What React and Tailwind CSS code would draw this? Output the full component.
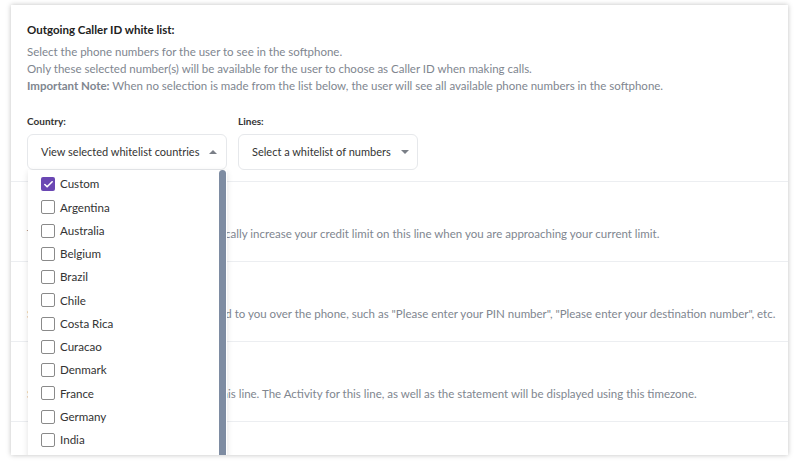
import { Check } from 'lucide-react'

const countries = [
  'Custom',
  'Argentina',
  'Australia',
  'Belgium',
  'Brazil',
  'Chile',
  'Costa Rica',
  'Curacao',
  'Denmark',
  'France',
  'Germany',
  'India',
]

const rows = [
  'Tick this option if you want to automatically increase your credit limit on this line when you are approaching your current limit.',
  'Select a language for the prompts played to you over the phone, such as "Please enter your PIN number", "Please enter your destination number", etc.',
  'Select the timezone which is used for this line. The Activity for this line, as well as the statement will be displayed using this timezone.',
  '',
]

function Caret({ up }) {
  return (
    <span
      className={
        up
          ? 'h-0 w-0 border-x-[4px] border-b-[4px] border-x-transparent border-b-[#7a7f87]'
          : 'h-0 w-0 border-x-[4px] border-t-[4px] border-x-transparent border-t-[#7a7f87]'
      }
    />
  )
}

function CountryDropdown() {
  return (
    <div className="absolute left-[17px] top-[165px] h-[290px] w-[199px] bg-white shadow-[0_2px_6px_rgba(0,0,0,0.12)]">
      <div className="flex flex-col pt-[2.4px]">
        {countries.map((c, i) => (
          <label key={c} className="flex h-[23.27px] items-center gap-[5px] pl-[13px] text-[11.6px] text-[#333]">
            {i === 0 ? (
              <span className="flex h-[14px] w-[14px] items-center justify-center rounded-[2px] bg-[#6a47b3]">
                <Check size={11} strokeWidth={3.5} className="text-white" />
              </span>
            ) : (
              <span className="h-[14px] w-[14px] rounded-[2px] border-[1.5px] border-[#8a8a8a] bg-white" />
            )}
            {c}
          </label>
        ))}
      </div>
      <div className="absolute bottom-0 right-[1px] top-0 w-[7px] rounded-t-[4px] bg-[#7e8ca2]" />
    </div>
  )
}

export default function App() {
  return (
    <div className="h-[462px] w-[800px] overflow-hidden bg-white px-[11px] pt-[5px] font-['Lato','Liberation_Sans',sans-serif]">
      <div className="relative h-[450px] w-[777px] overflow-hidden bg-white shadow-[0_0_5px_rgba(0,0,0,0.25)]">
        <div className="px-[16px] pt-[17px]">
          <h2 className="text-[11.5px] font-bold leading-[16px] text-[#222]">Outgoing Caller ID white list:</h2>
          <div className="mt-[5px] text-[11.5px] leading-[17px] text-[#80868f]">
            <p>Select the phone numbers for the user to see in the softphone.</p>
            <p>Only these selected number(s) will be available for the user to choose as Caller ID when making calls.</p>
            <p>
              <span className="font-bold">Important Note:</span> When no selection is made from the list below, the user
              will see all available phone numbers in the softphone.
            </p>
          </div>
          <div className="mt-[20px] flex gap-[11px]">
            <div className="flex flex-col">
              <span className="text-[10px] font-bold leading-[14px] text-[#333]">Country:</span>
              <button className="mt-[6px] flex h-[36px] w-[200px] items-center justify-between whitespace-nowrap rounded-[6px] border border-[#e6e8eb] pl-[13px] pr-[9px] text-[11px] text-[#333]">
                View selected whitelist countries
                <Caret up />
              </button>
            </div>
            <div className="flex flex-col">
              <span className="text-[10px] font-bold leading-[14px] text-[#333]">Lines:</span>
              <button className="mt-[6px] flex h-[36px] w-[180px] items-center justify-between whitespace-nowrap rounded-[6px] border border-[#e6e8eb] pl-[13px] pr-[8px] text-[11px] text-[#333]">
                Select a whitelist of numbers
                <Caret />
              </button>
            </div>
          </div>
        </div>
        <div className="mt-[11px] flex flex-col">
          {rows.map((r, i) => (
            <div key={i} className="h-[80px] border-t border-[#eceef1] px-[16px] pt-[43px]">
              <p className="whitespace-nowrap text-[11.5px] leading-[17px] text-[#80868f]">{r}</p>
            </div>
          ))}
        </div>
        <CountryDropdown />
      </div>
    </div>
  )
}
